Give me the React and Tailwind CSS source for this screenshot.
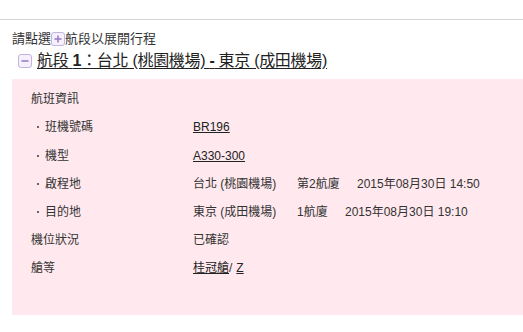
import React from 'react'

function ToggleIcon({ type }) {
  return (
    <span className="inline-flex items-center justify-center w-[14px] h-[14px] rounded-[3px] border border-[#c4b3e0] bg-[#f5f0fb] shrink-0">
      <svg width="10" height="10" viewBox="0 0 10 10">
        <rect x="1.5" y="4.2" width="7" height="1.6" fill="#9a80c8" />
        {type === 'plus' && <rect x="4.2" y="1.5" width="1.6" height="7" fill="#9a80c8" />}
      </svg>
    </span>
  )
}

function Row({ label, bullet, children }) {
  return (
    <div className="flex items-center h-[28px]">
      <div className={`w-[162px] shrink-0 flex items-center ${bullet ? 'pl-[6px]' : ''}`}>
        {bullet && <span className="w-[2px] h-[2px] bg-[#666] mr-[6px]" />}
        <span>{label}</span>
      </div>
      <div className="flex items-center">{children}</div>
    </div>
  )
}

export default function App() {
  return (
    <div className="w-[523px] h-[332px] bg-white text-[#333] font-['Liberation_Sans','Noto_Sans_CJK_TC',sans-serif] overflow-hidden">
      <div className="h-[19px]" />
      <div className="border-t border-[#d4d4d4] pt-[11px]">
        <div className="flex items-center pl-[12px] text-[13px] leading-[16px] h-[16px]">
          <span>請點選</span>
          <ToggleIcon type="plus" />
          <span>航段以展開行程</span>
        </div>
        <div className="flex items-center pl-[18px] h-[22px] mt-[3px] text-[16px] text-[#222]">
          <ToggleIcon type="minus" />
          <span className="ml-[5px] underline underline-offset-[2px] tracking-[-0.3px]">
            航段 <span className="font-bold">1</span>：台北 (桃園機場) <span className="font-bold">-</span> 東京 (成田機場)
          </span>
        </div>
        <div className="ml-[12px] mt-[7px] h-[236px] bg-[#ffe9ee] pl-[19px] pt-[6px] text-[12px]">
          <Row label="航班資訊" />
          <Row label="班機號碼" bullet>
            <span className="underline text-[#222]">BR196</span>
          </Row>
          <div className="h-[1px]" />
          <Row label="機型" bullet>
            <span className="underline text-[#222]">A330-300</span>
          </Row>
          <Row label="啟程地" bullet>
            <span className="w-[104px]">台北 (桃園機場)</span>
            <span className="w-[60px]">第2航廈</span>
            <span>2015年08月30日 14:50</span>
          </Row>
          <Row label="目的地" bullet>
            <span className="w-[104px]">東京 (成田機場)</span>
            <span className="w-[48px]">1航廈</span>
            <span>2015年08月30日 19:10</span>
          </Row>
          <Row label="機位狀況">
            <span>已確認</span>
          </Row>
          <Row label="艙等">
            <span className="underline text-[#222]">桂冠艙</span>
            <span>/</span>
            <span className="underline text-[#222] ml-[4px]">Z</span>
          </Row>
        </div>
      </div>
    </div>
  )
}
